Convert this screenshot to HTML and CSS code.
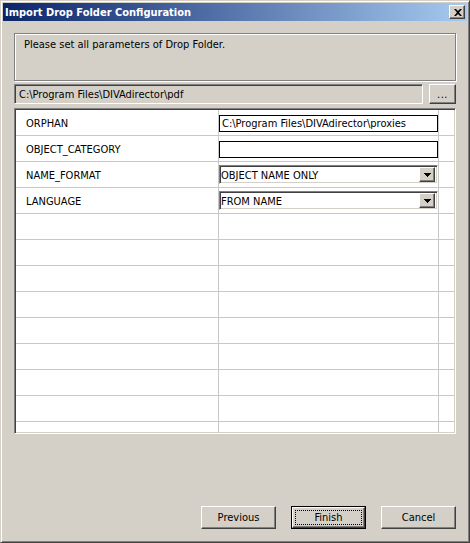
FILE: index.html
```html
<!DOCTYPE html>
<html>
<head>
<meta charset="utf-8">
<link rel="stylesheet" href="styles.css">
</head>
<body>
<div class="window">
  <div class="titlebar">
    <span class="title">Import Drop Folder Configuration</span>
    <div class="close raised">
      <svg width="8" height="7" viewBox="0 0 8 7"><path d="M0 0h2l2 2 2-2h2l-3 3.5 3 3.5h-2l-2-2-2 2h-2l3-3.5z" fill="#000"/></svg>
    </div>
  </div>
  <div class="content">
    <div class="message">Please set all parameters of Drop Folder.</div>
    <div class="pathrow">
      <div class="pathfield sunken">C:\Program Files\DIVAdirector\pdf</div>
      <div class="browse raised">...</div>
    </div>
    <div class="grid sunken">
      <div class="row">
        <div class="c1">ORPHAN</div>
        <div class="c2"><div class="textbox">C:\Program Files\DIVAdirector\proxies</div></div>
        <div class="c3"></div>
      </div>
      <div class="row">
        <div class="c1">OBJECT_CATEGORY</div>
        <div class="c2"><div class="textbox"></div></div>
        <div class="c3"></div>
      </div>
      <div class="row">
        <div class="c1">NAME_FORMAT</div>
        <div class="c2">
          <div class="combo sunken"><span class="combo-text">OBJECT NAME ONLY</span><span class="drop raised"><svg width="7" height="4" viewBox="0 0 7 4"><path d="M0 0H7V1H6V2H5V3H4V4H3V3H2V2H1V1H0Z" fill="#000"/></svg></span></div>
        </div>
        <div class="c3"></div>
      </div>
      <div class="row">
        <div class="c1">LANGUAGE</div>
        <div class="c2">
          <div class="combo sunken"><span class="combo-text">FROM NAME</span><span class="drop raised"><svg width="7" height="4" viewBox="0 0 7 4"><path d="M0 0H7V1H6V2H5V3H4V4H3V3H2V2H1V1H0Z" fill="#000"/></svg></span></div>
        </div>
        <div class="c3"></div>
      </div>
      <div class="row"><div class="c1"></div><div class="c2"></div><div class="c3"></div></div>
      <div class="row"><div class="c1"></div><div class="c2"></div><div class="c3"></div></div>
      <div class="row"><div class="c1"></div><div class="c2"></div><div class="c3"></div></div>
      <div class="row"><div class="c1"></div><div class="c2"></div><div class="c3"></div></div>
      <div class="row"><div class="c1"></div><div class="c2"></div><div class="c3"></div></div>
      <div class="row"><div class="c1"></div><div class="c2"></div><div class="c3"></div></div>
      <div class="row"><div class="c1"></div><div class="c2"></div><div class="c3"></div></div>
      <div class="row"><div class="c1"></div><div class="c2"></div><div class="c3"></div></div>
      <div class="row"><div class="c1"></div><div class="c2"></div><div class="c3"></div></div>
    </div>
    <div class="buttons">
      <div class="btn raised">Previous</div>
      <div class="btn default"><div class="btn-inner raised"><span class="focus">Finish</span></div></div>
      <div class="btn raised">Cancel</div>
    </div>
  </div>
</div>
</body>
</html>
```
FILE: styles.css
```css
* { box-sizing: border-box; }
html, body {
  margin: 0;
  padding: 0;
  background: #d4d0c8;
}
body {
  font-family: "DejaVu Sans Condensed", "DejaVu Sans", sans-serif;
  font-stretch: condensed;
  font-size: 11px;
  color: #000;
}
.window {
  width: 470px;
  height: 543px;
  border: 1px solid;
  border-color: #d4d0c8 #404040 #404040 #d4d0c8;
  box-shadow: inset 1px 1px #fff, inset -1px -1px #808080;
  padding: 2px;
  background: #d4d0c8;
  display: flex;
  flex-direction: column;
  overflow: hidden;
}
.titlebar {
  height: 18px;
  flex: none;
  background: linear-gradient(to right, #0a246a, #a6caf0);
  display: flex;
  align-items: center;
  justify-content: space-between;
  padding: 0 2px 0 2px;
}
.title {
  color: #fff;
  font-weight: bold;
  font-size: 11px;
  line-height: 13px;
}
.raised {
  background: #d4d0c8;
  border: 1px solid;
  border-color: #fff #404040 #404040 #fff;
  box-shadow: inset -1px -1px #808080, inset 1px 1px #d4d0c8;
}
.sunken {
  border: 1px solid;
  border-color: #808080 #fff #fff #808080;
  box-shadow: inset 1px 1px #404040, inset -1px -1px #d4d0c8;
}
.close {
  width: 16px;
  height: 14px;
  display: flex;
  align-items: center;
  justify-content: center;
  padding-left: 1px;
}
.close svg { display: block; }
.content {
  padding: 12px 11px 0 11px;
  display: flex;
  flex-direction: column;
}
.message {
  height: 48px;
  border: 1px solid #808080;
  box-shadow: inset 1px 1px #fff, 1px 1px #fff;
  padding: 4px 9px;
  line-height: 13px;
}
.pathrow {
  display: flex;
  gap: 6px;
  margin-top: 3px;
  height: 20px;
}
.pathfield {
  flex: 1;
  background: #d4d0c8;
  display: flex;
  align-items: center;
  padding-left: 4px;
  padding-top: 1px;
}
.browse {
  width: 27px;
  display: flex;
  align-items: flex-end;
  justify-content: center;
  line-height: 12px;
  padding-bottom: 2px;
  letter-spacing: 0.5px;
}
.grid {
  margin-top: 4px;
  height: 326px;
  background: #fff;
  padding: 1px;
  overflow: hidden;
}
.row {
  display: grid;
  grid-template-columns: 203px 220px 1fr;
  height: 26px;
  border-bottom: 1px solid #c8c8c8;
}
.c1, .c2 {
  border-right: 1px solid #c8c8c8;
}
.c1 {
  display: flex;
  align-items: center;
  padding-left: 10px;
  padding-top: 1px;
}
.c2 {
  display: flex;
  align-items: flex-start;
}
.textbox {
  margin-top: 5px;
  width: 219px;
  height: 17px;
  border: 1px solid #000;
  padding-left: 2px;
  padding-top: 1px;
  line-height: 14px;
  white-space: nowrap;
  overflow: hidden;
}
.combo {
  margin-top: 3px;
  width: 219px;
  height: 19px;
  background: #fff;
  display: flex;
  align-items: center;
  padding: 2px 2px 2px 1px;
}
.combo-text {
  flex: 1;
  line-height: 15px;
  padding-top: 2px;
}
.drop {
  width: 16px;
  height: 15px;
  display: flex;
  align-items: center;
  justify-content: center;
  padding-top: 1px;
}
.drop svg { display: block; }
.buttons {
  margin-top: 72px;
  display: flex;
  justify-content: flex-end;
  gap: 15px;
}
.btn {
  width: 75px;
  height: 23px;
  display: flex;
  align-items: center;
  justify-content: center;
  line-height: 13px;
}
.default {
  border: 1px solid #000;
  padding: 0;
}
.btn-inner {
  width: 100%;
  height: 100%;
  display: flex;
  padding: 2px;
}
.focus {
  flex: 1;
  border: 1px dotted #000;
  display: flex;
  align-items: center;
  justify-content: center;
}
```
